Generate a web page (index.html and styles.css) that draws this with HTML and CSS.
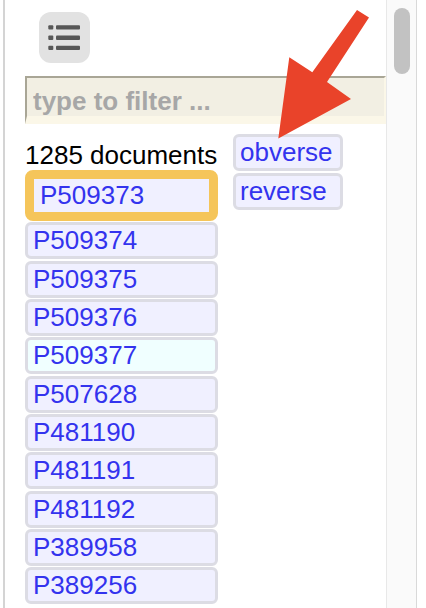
FILE: index.html
```html
<!DOCTYPE html>
<html lang="en">
<head>
<meta charset="utf-8">
<title>Documents</title>
<link rel="stylesheet" href="styles.css">
</head>
<body>
<div class="window">
  <div class="content">
    <button class="menu-btn" type="button" aria-label="Menu">
      <svg width="51" height="51" viewBox="0 0 51 51">
        <rect x="9.3" y="13.3" width="5" height="4.3" rx="1" fill="#575757"/>
        <rect x="17" y="13.3" width="24" height="4.3" rx="1" fill="#575757"/>
        <rect x="9.3" y="23.6" width="5" height="4.3" rx="1" fill="#575757"/>
        <rect x="17" y="23.6" width="24" height="4.3" rx="1" fill="#575757"/>
        <rect x="9.3" y="33.8" width="5" height="4.3" rx="1" fill="#575757"/>
        <rect x="17" y="33.8" width="24" height="4.3" rx="1" fill="#575757"/>
      </svg>
    </button>
    <input class="filter" type="text" placeholder="type to filter ...">
    <div class="row">
      <div class="docs">
        <div class="count">1285 documents</div>
        <ul class="doc-list">
          <li class="doc selected">P509373</li>
          <li class="doc">P509374</li>
          <li class="doc">P509375</li>
          <li class="doc">P509376</li>
          <li class="doc visited">P509377</li>
          <li class="doc">P507628</li>
          <li class="doc">P481190</li>
          <li class="doc">P481191</li>
          <li class="doc">P481192</li>
          <li class="doc">P389958</li>
          <li class="doc">P389256</li>
        </ul>
      </div>
      <div class="sides">
        <div class="side">obverse</div>
        <div class="side">reverse</div>
      </div>
    </div>
  </div>
  <div class="scrolltrack"><div class="thumb"></div></div>
</div>
<svg class="arrow" width="426" height="160" viewBox="0 0 426 160">
  <polygon points="357,10 369,17.5 327,82 351,99 278.3,138.5 289.3,57.3 312.3,72.3" fill="#e9432a"/>
</svg>
</body>
</html>
```

FILE: styles.css
```css
html, body {
  margin: 0;
  padding: 0;
  background: #ffffff;
}

body {
  width: 426px;
  height: 608px;
  overflow: hidden;
  position: relative;
  font-family: "Liberation Sans", Arial, Helvetica, sans-serif;
  font-size: 26px;
}

.window {
  display: flex;
  height: 608px;
  width: 414px;
  margin-left: 3px;
  box-sizing: border-box;
  border-left: 2px solid #d4d4d4;
  border-right: 1px solid #d9d9d9;
}

.content {
  flex: 1;
  min-width: 0;
  overflow: hidden;
  padding: 12px 0 0 20px;
  display: flex;
  flex-direction: column;
  align-items: flex-start;
}

.menu-btn {
  width: 51px;
  height: 51px;
  margin: 0 0 0 14px;
  padding: 0;
  border: none;
  border-radius: 12px;
  background: #e2e2e2;
  display: flex;
  flex-shrink: 0;
}

.filter {
  margin-top: 13px;
  width: 100%;
  height: 48px;
  box-sizing: border-box;
  flex-shrink: 0;
  border-style: solid;
  border-width: 2px 2px 8px 2px;
  border-color: #a9a696 #fbf7e8 #fbf7e8 #a9a696;
  background: #f2efe3;
  padding: 8px 6px 0 6px;
  font-family: "Liberation Sans", Arial, Helvetica, sans-serif;
  font-size: 26px;
  font-weight: bold;
  line-height: 30px;
  outline: none;
}

.filter::placeholder {
  color: #a7a7a7;
  opacity: 1;
}

.row {
  margin-top: 10px;
  display: flex;
  align-items: flex-start;
  gap: 15px;
}

.docs {
  width: 193px;
  flex-shrink: 0;
}

.count {
  margin-top: 6px;
  line-height: 30px;
  color: #000000;
  white-space: nowrap;
}

.doc-list {
  list-style: none;
  margin: 0;
  padding: 0;
}

.doc {
  border: 3px solid #dcdce4;
  border-radius: 6px;
  background: #f0f0ff;
  color: #3333ee;
  line-height: 31px;
  padding: 0 5px;
  margin-bottom: 1.33px;
}

.doc.visited {
  background: #f0ffff;
}

.doc.selected {
  border: 9px solid #f5c55a;
  border-radius: 8px;
  line-height: 33px;
  padding: 0 6px;
}

.sides {
  display: flex;
  flex-direction: column;
  gap: 2px;
}

.side {
  border: 3px solid #dcdce4;
  border-radius: 6px;
  background: #f0f0ff;
  color: #3333ee;
  line-height: 31px;
  padding: 0 7px 0 4px;
}

.scrolltrack {
  width: 29px;
  flex-shrink: 0;
  border-left: 1px solid #e8e8e8;
  background: #fafafa;
  padding-top: 8px;
  display: flex;
  justify-content: center;
  align-items: flex-start;
}

.thumb {
  width: 16px;
  height: 66px;
  border-radius: 8px;
  background: #c2c2c2;
}

.arrow {
  position: absolute;
  left: 0;
  top: 0;
  pointer-events: none;
}
```
